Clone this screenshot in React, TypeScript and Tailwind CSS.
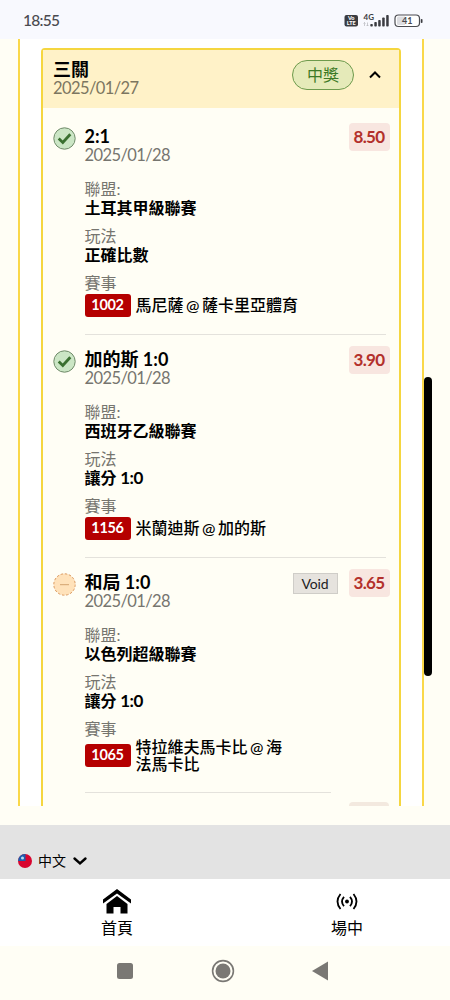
import { ReactNode } from "react";

type Leg = {
  title: string;
  league: string;
  market: string;
  code: string;
  event: ReactNode;
  odds: string;
  isVoid?: boolean;
};

const legs: Leg[] = [
  {
    title: "2:1",
    league: "土耳其甲級聯賽",
    market: "正確比數",
    code: "1002",
    event: "馬尼薩 @ 薩卡里亞體育",
    odds: "8.50",
  },
  {
    title: "加的斯 1:0",
    league: "西班牙乙級聯賽",
    market: "讓分 1:0",
    code: "1156",
    event: "米蘭迪斯 @ 加的斯",
    odds: "3.90",
  },
  {
    title: "和局 1:0",
    league: "以色列超級聯賽",
    market: "讓分 1:0",
    code: "1065",
    event: (
      <>
        特拉維夫馬卡比 @ 海
        <br />
        法馬卡比
      </>
    ),
    odds: "3.65",
    isVoid: true,
  },
];

function StatusBar() {
  return (
    <header className="flex h-[39px] shrink-0 items-center justify-between bg-[#f8f9fe] pt-[3px] pr-[26px] pl-[23px]">
      <span className="text-[15.5px] leading-none font-medium tracking-[-0.7px] text-[#4a4b50]">18:55</span>
      <svg width="80" height="16" viewBox="0 0 80 16">
        <rect x="0.5" y="2" width="13.5" height="11.5" rx="2" fill="#3b3c41" />
        <text x="7.2" y="7.4" fontSize="5.5" fontWeight="900" fill="#fff" textAnchor="middle">Vo</text>
        <text x="7.2" y="12.4" fontSize="5.5" fontWeight="900" fill="#fff" textAnchor="middle">LTE</text>
        <text x="19.5" y="7.2" fontSize="8" fontWeight="700" fill="#3b3c41">4G</text>
        <path d="M20.5 13V9.5M19.5 10.5l1-1 1 1M23.5 9.5V13M22.5 12l1 1 1-1" stroke="#b5b6ba" strokeWidth=".7" fill="none" />
        <g fill="#3b3c41">
          <rect x="26.3" y="11" width="2.5" height="2.5" rx=".8" />
          <rect x="30.3" y="9" width="2.5" height="4.5" rx=".8" />
          <rect x="34.2" y="7" width="2.5" height="6.5" rx=".8" />
          <rect x="38.2" y="4.5" width="2.5" height="9" rx=".8" />
          <rect x="42.2" y="2" width="2.5" height="11.5" rx=".8" />
        </g>
        <rect x="51" y="2" width="24.5" height="11.5" rx="3.5" fill="#fff" stroke="#4a4b50" strokeWidth="1.2" />
        <path d="M53 5q0-1.5 1.5-1.5H61V12h-6.5Q53 12 53 10.5z" fill="#dcdde1" />
        <rect x="76.8" y="6" width="1.7" height="4" rx=".8" fill="#3b3c41" />
        <text x="63.2" y="11" fontSize="9" fontWeight="700" fill="#4a4b50" textAnchor="middle">41</text>
      </svg>
    </header>
  );
}

function WonIcon() {
  return (
    <svg width="23" height="23" viewBox="0 0 23 23" className="block">
      <circle cx="11.5" cy="11.5" r="10.7" fill="#cbe6c5" stroke="#6f8a69" />
      <path d="M5.7 11.6l4.1 3.9 7.5-8.2" fill="none" stroke="#3a7030" strokeWidth="2.8" />
    </svg>
  );
}

function VoidIcon() {
  return (
    <svg width="23" height="23" viewBox="0 0 23 23" className="block">
      <circle cx="11.5" cy="11.5" r="10.7" fill="#ffe2ba" stroke="#dc9c62" strokeDasharray="2.5 1.7" />
      <path d="M7 11.7h9" stroke="#d3a36f" strokeWidth="1" />
    </svg>
  );
}

function LegRow({ leg }: { leg: Leg }) {
  // split the score off so its digits can be set larger than the CJK text
  const [market, score] = leg.market.split(" ");

  return (
    <div className="flex pl-[10px]">
      <div className="w-[31.5px] shrink-0 pt-[14.5px]">{leg.isVoid ? <VoidIcon /> : <WonIcon />}</div>
      <div className="flex-1 pt-[14px]">
        <div className="flex h-[38px] justify-between pr-[9.5px]">
          <div>
            <div className="h-5 text-[18px] leading-5 font-bold text-black">{leg.title}</div>
            <div className="text-[16.5px] leading-[18px] tracking-[-0.6px] text-[#76756f]">2025/01/28</div>
          </div>
          <div className="-mt-[3.5px] flex items-start gap-[11px]">
            {leg.isVoid && (
              <span className="mt-1 h-[21px] w-[45px] border border-[#cfcdc8] bg-[#e6e3de] text-center text-[14px] leading-[20px] tracking-[-0.2px] text-[#222]">
                Void
              </span>
            )}
            <span className="h-7 w-[41px] rounded bg-[#f8e6e0] text-center text-[17px] leading-[27px] font-bold tracking-[-0.6px] text-[#b3302b]">
              {leg.odds}
            </span>
          </div>
        </div>
        <div className="mt-[15px] text-[16px] leading-[19px] text-[#76756f]">聯盟:</div>
        <div className="text-[16px] leading-[19px] font-bold text-black">{leg.league}</div>
        <div className="mt-[9px] text-[16px] leading-[19px] text-[#76756f]">玩法</div>
        <div className="h-[19px] text-[16px] leading-[19px] font-bold text-black">
          {market}
          {score && <span className="text-[17px] tracking-[-0.5px]"> {score}</span>}
        </div>
        <div className="mt-[9px] text-[16px] leading-[19px] text-[#76756f]">賽事</div>
        <div className="mt-px flex min-h-[24px] items-center gap-[5px]">
          <span className="h-[23px] w-[46px] shrink-0 rounded-[3px] bg-[#b50000] text-center text-[14.5px] leading-[22px] font-bold tracking-[-0.3px] text-white">
            {leg.code}
          </span>
          <span className="-mt-px text-[16px] leading-[17px] font-medium [word-spacing:-1.5px] text-black">{leg.event}</span>
        </div>
        <div className={leg.isVoid ? "mt-[20px] mr-[68px] h-px bg-[#e4e2dc]" : "mt-[17.2px] mr-[13px] h-px bg-[#e4e2dc]"} />
      </div>
    </div>
  );
}

function Ticket() {
  return (
    <div className="flex h-[767px] shrink-0 overflow-hidden">
      <div className="mr-[26px] ml-[18px] flex-1 border-x-2 border-[#fad849] bg-white px-[21px] pt-[9px]">
        <div className="h-[900px] rounded-t-[4px] border-2 border-[#f5d63f] bg-[#fffef5]">
          <div className="flex h-[58px] items-start justify-between bg-[#fff2c8] pr-[17px] pl-[10px]">
            <div className="pt-[9px]">
              <div className="text-[18px] leading-5 font-bold text-black">三關</div>
              <div className="text-[16.5px] leading-[18px] tracking-[-0.6px] text-[#7c7660]">2025/01/27</div>
            </div>
            <div className="flex items-center gap-[14px] pt-[10px]">
              <span className="h-[30px] w-[62px] rounded-full border border-[#6e9a4c] bg-[#e5eab9] text-center text-[16px] leading-[28px] text-[#3d7a26]">
                中獎
              </span>
              <svg width="14" height="10" viewBox="0 0 14 10">
                <path d="M2 7.5L7 2.5l5 5" fill="none" stroke="#000" strokeWidth="2" />
              </svg>
            </div>
          </div>
          <div className="pt-[4px]">
            {legs.map((leg) => (
              <LegRow key={leg.code} leg={leg} />
            ))}
            <div className="mt-[9px] mr-[10px] ml-auto h-7 w-10 rounded bg-[#f3e9df]" />
          </div>
        </div>
      </div>
    </div>
  );
}

function LanguageBar() {
  return (
    <div className="mt-[19px] flex h-[54px] shrink-0 items-center bg-[#e3e3e3] pt-[18px] pl-[18px]">
      <svg width="14" height="14" viewBox="0 0 14 14">
        <clipPath id="flag">
          <circle cx="7" cy="7" r="7" />
        </clipPath>
        <g clipPath="url(#flag)">
          <rect width="14" height="14" fill="#d8052f" />
          <rect width="7.5" height="7" fill="#1d5dae" />
          <circle cx="4.5" cy="4" r="1.5" fill="#b9d9ef" />
        </g>
      </svg>
      <span className="ml-[6px] text-[14px] leading-none text-black">中文</span>
      <svg width="16" height="10" viewBox="0 0 16 10" className="ml-[6px]">
        <path d="M2.5 2.5L8 7.5l5.5-5" fill="none" stroke="#000" strokeWidth="2.4" strokeLinecap="round" />
      </svg>
    </div>
  );
}

function TabBar() {
  return (
    <nav className="flex h-[67px] shrink-0 bg-white pl-[2px] text-[16px] leading-5 text-black">
      <div className="flex w-[230px] shrink-0 flex-col items-center pt-[10px]">
        <svg width="28" height="26" viewBox="0 0 28 26">
          <path d="M0 10.5L14 0l14 10.5V14.5L14 4.5 0 14.5z" />
          <path d="M3.5 15L14 7l10.5 8v9.5h-7V18h-7v6.5h-7z" />
        </svg>
        <span className="mt-[3px]">首頁</span>
      </div>
      <div className="flex w-[230px] shrink-0 flex-col items-center pt-[14px]">
        <svg width="22" height="17" viewBox="0 0 22 17" fill="none" stroke="#000" strokeWidth="1.8">
          <circle cx="11" cy="8.5" r="1.9" fill="#000" stroke="none" />
          <path d="M4.5 1Q-1.5 8.5 4.5 16M17.5 1Q23.5 8.5 17.5 16M8 3.8Q4 8.5 8 13.2M14 3.8Q18 8.5 14 13.2" />
        </svg>
        <span className="mt-[8px]">場中</span>
      </div>
    </nav>
  );
}

function SystemNav() {
  return (
    <div className="flex h-[54px] shrink-0 items-center bg-[#fffef5] pb-[4px] pl-[117px]">
      <div className="size-4 rounded-[2.5px] bg-[#7a7874]" />
      <svg width="24" height="24" viewBox="0 0 24 24" className="ml-[78px]">
        <circle cx="12" cy="12" r="10.4" fill="none" stroke="#7a7874" strokeWidth="1.6" />
        <circle cx="12" cy="12" r="7.5" fill="#7a7874" />
      </svg>
      <svg width="16" height="20" viewBox="0 0 16 20" className="ml-[77px]">
        <path d="M0 10L16 .5v19z" fill="#7a7874" />
      </svg>
    </div>
  );
}

export default function App() {
  return (
    <div className="relative flex h-[1000px] w-[450px] flex-col overflow-hidden bg-[#fffef5] font-['Lato','Noto_Sans_CJK_TC',sans-serif]">
      <StatusBar />
      <Ticket />
      <LanguageBar />
      <TabBar />
      <SystemNav />
      {/* scroll thumb */}
      <div className="absolute top-[377px] left-[424px] h-[299px] w-2 rounded-full bg-black" />
    </div>
  );
}
